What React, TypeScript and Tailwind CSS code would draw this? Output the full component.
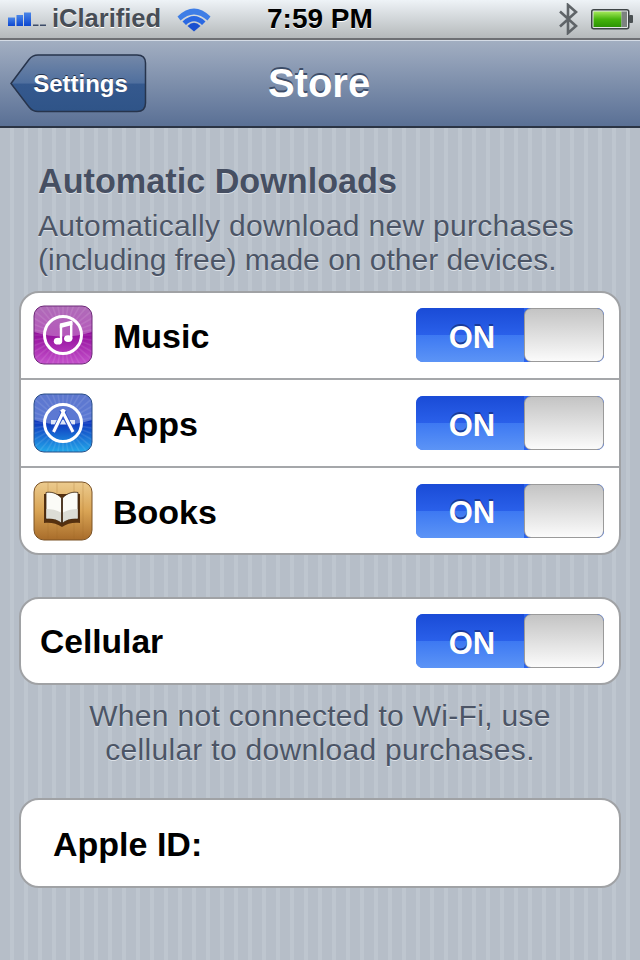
import React from "react";

function Toggle() {
  return (
    <div className="flex h-[54px] w-[188px] overflow-hidden rounded-[7px] bg-[#2a62ee]">
      <div className="relative flex w-[108px] flex-col">
        <div className="h-[27px] bg-gradient-to-b from-[#1a4bd6] to-[#2a60ea]" />
        <div className="h-[27px] bg-gradient-to-b from-[#3d78f2] to-[#5c94f6]" />
        <span className="absolute inset-0 flex items-center justify-center pl-[4px] pt-[4px] text-[31px] font-bold leading-none text-white [text-shadow:0_-2px_0_#1a3a98]">ON</span>
      </div>
      <div className="flex-1 rounded-[7px] border border-[#9a9a9a] bg-gradient-to-b from-[#c4c4c4] to-[#fbfbfb]" />
    </div>
  );
}

const RAYS = Array.from({ length: 36 }, (_, i) => (i * Math.PI * 2) / 36);

function Rays({ opacity }: { opacity: number }) {
  return (
    <g stroke="#fff" strokeOpacity={opacity} strokeWidth="1.6">
      {RAYS.map((a) => (
        <line key={a} x1={30 + 20 * Math.cos(a)} y1={30 + 20 * Math.sin(a)} x2={30 + 42 * Math.cos(a)} y2={30 + 42 * Math.sin(a)} />
      ))}
    </g>
  );
}

function MusicIcon() {
  return (
    <svg width="60" height="60" viewBox="0 0 60 60">
      <defs>
        <linearGradient id="mg" x1="0" y1="0" x2="0" y2="1">
          <stop offset="0" stopColor="#8e2e9a" />
          <stop offset="0.5" stopColor="#95109e" />
          <stop offset="1" stopColor="#c552cc" />
        </linearGradient>
        <clipPath id="mc"><rect x="1" y="1" width="58" height="58" rx="10" /></clipPath>
      </defs>
      <g clipPath="url(#mc)">
        <rect x="1" y="1" width="58" height="58" fill="url(#mg)" />
        <Rays opacity={0.1} />
        <path d="M1 1 H59 V27 Q30 36 1 27 Z" fill="#fff" fillOpacity="0.3" />
      </g>
      <rect x="1" y="1" width="58" height="58" rx="10" fill="none" stroke="#6d2a78" />
      <circle cx="30" cy="30" r="18.5" fill="none" stroke="#fff" strokeWidth="3" />
      <path d="M28 36 V20 M38.2 33.5 V17" fill="none" stroke="#fff" strokeWidth="2.4" />
      <path d="M26.8 18.6 L39.4 15.4 V20 L26.8 23.2 Z" fill="#fff" />
      <ellipse cx="25" cy="36.2" rx="4.2" ry="3.4" fill="#fff" />
      <ellipse cx="35.2" cy="33.6" rx="4.2" ry="3.4" fill="#fff" />
    </svg>
  );
}

function AppsIcon() {
  return (
    <svg width="60" height="60" viewBox="0 0 60 60">
      <defs>
        <linearGradient id="ag" x1="0" y1="0" x2="0" y2="1">
          <stop offset="0" stopColor="#1238b8" />
          <stop offset="0.5" stopColor="#0f3ac0" />
          <stop offset="1" stopColor="#22a8ea" />
        </linearGradient>
        <clipPath id="ac"><rect x="1" y="1" width="58" height="58" rx="10" /></clipPath>
      </defs>
      <g clipPath="url(#ac)">
        <rect x="1" y="1" width="58" height="58" fill="url(#ag)" />
        <Rays opacity={0.1} />
        <path d="M1 1 H59 V27 Q30 36 1 27 Z" fill="#fff" fillOpacity="0.32" />
      </g>
      <rect x="1" y="1" width="58" height="58" rx="10" fill="none" stroke="#2a4f88" />
      <circle cx="30" cy="30" r="18.5" fill="none" stroke="#fff" strokeWidth="3" />
      <rect x="18" y="27" width="24" height="4.4" fill="#dfe6f6" />
      <path d="M31.5 17 L20.5 39 M28.5 17 L40 39" stroke="#2f55c8" strokeWidth="5" fill="none" />
      <path d="M31.5 16.5 L20.5 39 M28.5 16.5 L40 39" stroke="#fff" strokeWidth="3" fill="none" />
    </svg>
  );
}

function BooksIcon() {
  return (
    <svg width="60" height="60" viewBox="0 0 60 60">
      <defs>
        <linearGradient id="bg" x1="0" y1="0" x2="0" y2="1">
          <stop offset="0" stopColor="#eccb8e" />
          <stop offset="0.5" stopColor="#d9a455" />
          <stop offset="1" stopColor="#a86c2a" />
        </linearGradient>
      </defs>
      <rect x="1" y="1" width="58" height="58" rx="10" fill="url(#bg)" stroke="#7a5225" />
      <path d="M15 2 V58 M24 2 V58 M41 2 V58 M50 2 V58" stroke="#a06a28" strokeOpacity="0.18" strokeWidth="1.5" />
      <path d="M29 46 C24 42 16 41 11 42 V13 H47 V42 C42 41 34 42 29 46 Z" fill="#55300f" />
      <path d="M28.5 17 C24 12 18 10.5 13 11.5 V38 C18 37 24.5 38 28.5 42 Z" fill="#fbfbf7" stroke="#3a2410" strokeWidth="0.8" />
      <path d="M29.5 17 C34 12 40 10.5 45 11.5 V38 C40 37 33.5 38 29.5 42 Z" fill="#fbfbf7" stroke="#3a2410" strokeWidth="0.8" />
      <path d="M13.5 28 C18 28 24 29 28 31.5 V41 C24 38 18 37 13.5 37.5 Z" fill="#dcddd6" />
      <path d="M44.5 28 C40 28 34 29 30 31.5 V41 C34 38 40 37 44.5 37.5 Z" fill="#dcddd6" />
    </svg>
  );
}

function Signal() {
  return (
    <svg width="40" height="15" viewBox="0 0 40 15">
      <defs>
        <linearGradient id="sg" x1="0" y1="0" x2="0" y2="1">
          <stop offset="0" stopColor="#4a86e8" />
          <stop offset="1" stopColor="#0c46d0" />
        </linearGradient>
      </defs>
      <rect x="0" y="5.5" width="7" height="8.5" fill="url(#sg)" />
      <rect x="8.5" y="3" width="6.5" height="11" fill="url(#sg)" />
      <rect x="16" y="0.5" width="7" height="13.5" fill="url(#sg)" />
      <rect x="25" y="12.5" width="5.5" height="1.5" fill="#3d4c68" />
      <rect x="32" y="12.5" width="6" height="1.5" fill="#3d4c68" />
    </svg>
  );
}

function Wifi() {
  return (
    <svg width="34" height="26" viewBox="0 0 34 26">
      <path d="M0.5 10.5 Q17 -5.5 33.5 10.5 L30.5 14.5 Q17 2.5 3.5 14.5 Z" fill="#3f7ee6" />
      <path d="M5.5 15.5 Q17 4.5 28.5 15.5 L25 19 Q17 11.5 9 19 Z" fill="#2a68e2" />
      <path d="M10.5 20 Q17 13.5 23.5 20 L17 25.5 Z" fill="#1a50d0" />
    </svg>
  );
}

function Bluetooth() {
  return (
    <svg width="20" height="32" viewBox="0 0 20 32">
      <path d="M2 8.5 L18 23 L10 30 V2 L18 9 L2 23.5" fill="none" stroke="#5f6468" strokeWidth="2.6" />
    </svg>
  );
}

function Battery() {
  return (
    <svg width="43" height="21" viewBox="0 0 43 21">
      <defs>
        <linearGradient id="bt" x1="0" y1="0" x2="0" y2="1">
          <stop offset="0" stopColor="#a4e85a" />
          <stop offset="0.5" stopColor="#46b40c" />
          <stop offset="1" stopColor="#2c9404" />
        </linearGradient>
      </defs>
      <rect x="0.75" y="0.75" width="37" height="19" rx="2" fill="#e4e8e8" stroke="#3e4446" strokeWidth="1.5" />
      <rect x="2.5" y="2.5" width="28" height="15.5" fill="url(#bt)" />
      <rect x="30.5" y="2.5" width="5.5" height="15.5" fill="#7c8280" />
      <rect x="38" y="6" width="4" height="8" rx="1" fill="#4a5052" />
    </svg>
  );
}

function Row({ icon, label, className }: { icon: React.ReactNode; label: string; className: string }) {
  return (
    <div className={`flex items-center pl-[12px] pr-[15px] ${className}`}>
      {icon}
      <span className="ml-[20px] mt-[2px] flex-1 text-[34px] font-bold leading-none text-black">{label}</span>
      <Toggle />
    </div>
  );
}

export default function App() {
  return (
    <div className="flex h-[960px] w-[640px] flex-col overflow-hidden font-['Liberation_Sans',Arial,sans-serif]">
      <header className="flex h-[40px] items-center border-b-2 border-[#6e7074] bg-gradient-to-b from-[#eef3f7] to-[#b5b9bb] pl-[8px] pr-[6px]">
        <div className="flex w-[218px] items-center">
          <Signal />
          <span className="ml-[4px] text-[25.5px] font-bold leading-none text-[#474d56] [text-shadow:0_1px_0_#fff]">iClarified</span>
          <span className="ml-[16px]"><Wifi /></span>
        </div>
        <span className="ml-[41px] text-[28px] font-bold leading-none text-black [text-shadow:0_1px_0_#fff]">7:59 PM</span>
        <div className="ml-auto flex items-center gap-[13px]">
          <Bluetooth />
          <Battery />
        </div>
      </header>
      <nav className="relative flex h-[88px] items-center justify-center border-b-2 border-[#2b3444] bg-gradient-to-b from-[#a3afc2] to-[#5a7095] pr-[2px] shadow-[inset_0_1px_0_#d5dce6]">
        <div className="absolute left-[10px] top-[14px] flex h-[59px] w-[137px] items-center justify-center pl-[4px]">
          <svg className="absolute inset-0" width="137" height="59" viewBox="0 0 137 59">
            <defs>
              <linearGradient id="bk" x1="0" y1="0" x2="0" y2="1">
                <stop offset="0" stopColor="#7488a8" />
                <stop offset="0.5" stopColor="#4f6f9e" />
                <stop offset="0.51" stopColor="#35598e" />
                <stop offset="1" stopColor="#2f5488" />
              </linearGradient>
            </defs>
            <path d="M1 29.5 L19 5.5 Q22.5 1 28 1 H127 Q135.5 1 135.5 9 V49 Q135.5 57.5 127 57.5 H28 Q22.5 57.5 19 53 Z" fill="url(#bk)" stroke="#27344c" strokeWidth="1.5" />
          </svg>
          <span className="relative text-[24px] font-bold leading-none text-white [text-shadow:0_-1px_0_#26344c]">Settings</span>
        </div>
        <span className="text-[40px] font-bold leading-none text-white [text-shadow:0_-2px_0_#3d4d68]">Store</span>
      </nav>
      <main className="flex-1 bg-[repeating-linear-gradient(90deg,#b6bec8_0px,#b6bec8_10px,#bec6cf_10px,#bec6cf_14px)]">
        <div className="px-[38px] pt-[33px]">
          <h2 className="text-[34.2px] font-bold leading-[40px] text-[#464f62] [text-shadow:0_1px_0_#dde2e8]">Automatic Downloads</h2>
          <p className="mt-[8px] whitespace-nowrap text-[30px] leading-[34px] tracking-[0.3px] text-[#4c5566] [text-shadow:0_1px_0_#dde2e8]">
            Automatically download new purchases
            <br />
            <span className="tracking-normal">(including free) made on other devices.</span>
          </p>
        </div>
        <section className="mx-[19px] mt-[14px] overflow-hidden rounded-[20px] border-2 border-[#a0a2a5] bg-white">
          <Row icon={<MusicIcon />} label="Music" className="h-[87px] border-b-2 border-[#a5a7aa] pb-[1px]" />
          <Row icon={<AppsIcon />} label="Apps" className="h-[88px] border-b-2 border-[#a5a7aa]" />
          <Row icon={<BooksIcon />} label="Books" className="h-[85px]" />
        </section>
        <section className="mx-[19px] mt-[42px] flex h-[88px] items-center rounded-[20px] border-2 border-[#a0a2a5] bg-white pl-[19px] pr-[15px]">
          <span className="mt-[2px] flex-1 text-[33.6px] font-bold leading-none text-black">Cellular</span>
          <Toggle />
        </section>
        <p className="mt-[14px] whitespace-nowrap text-center text-[30px] leading-[34px] tracking-[0.3px] text-[#4c5566] [text-shadow:0_1px_0_#dde2e8]">
          When not connected to Wi-Fi, use
          <br />
          cellular to download purchases.
        </p>
        <section className="mx-[19px] mt-[31px] flex h-[90px] items-center rounded-[20px] border-2 border-[#a0a2a5] bg-white pl-[32px]">
          <span className="mt-[2px] text-[34px] font-bold leading-none text-black">Apple ID:</span>
        </section>
      </main>
    </div>
  );
}
